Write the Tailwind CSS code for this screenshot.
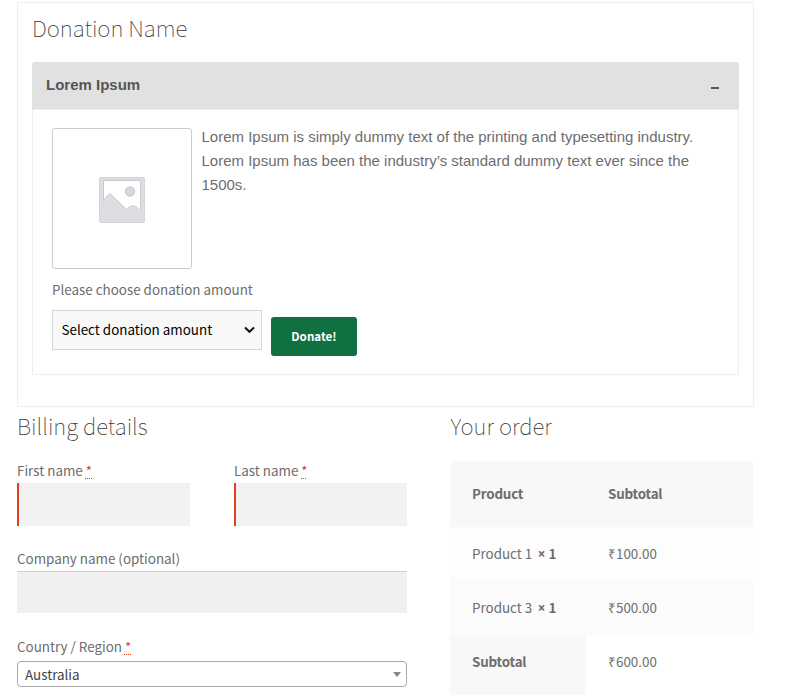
<!DOCTYPE html>
<html lang="en"><head><meta charset="utf-8"><title>Checkout</title>
<script src="https://cdn.jsdelivr.net/npm/@tailwindcss/browser@4"></script></head>
<body class="bg-white font-['Noto_Sans_CJK_SC',sans-serif] text-[13.4px] leading-6 text-[#6d6d6d] h-[695px] overflow-hidden">
<main class="ml-[17px] w-[737px] pt-[2px]">
  <section class="h-[405px] border border-[#eeeeee] px-[14px] pt-[7px]">
    <h2 class="h-[52px] text-[22.3px] leading-[34px] font-thin text-[#333333]">Donation Name</h2>
    <div class="flex h-[47px] items-center justify-between rounded-t-[3px] bg-[#e1e1e1] pl-[14px] pr-5 font-['Liberation_Sans',sans-serif] text-[15px] font-bold text-[#555555]">
      <h3 class="-mt-[1px]">Lorem Ipsum</h3><span class="mt-[4px] h-[2px] w-2 bg-[#555555]"></span>
    </div>
    <div class="h-[266px] border border-[#eeeeee] px-[19px] pt-[18px]">
      <div class="flex gap-[9.5px]">
        <div class="flex h-[141px] w-[140px] shrink-0 items-center justify-center rounded-[3px] border border-[#cccccc]">
          <svg class="mt-[2px] h-[46px] w-[46px]" viewBox="0 0 46 46"><rect x=".5" y=".5" width="45" height="45" rx="1" fill="#dddee2" stroke="#d2d4d7"/><path d="M4.500 3.500H41.500V34C38 30 36 29 33.500 29C30.500 29 29.500 31 27.500 32.500L11 16.500L8 19L4.500 24Z" fill="#fff" stroke="#c4c6ca" stroke-width=".9"/><circle cx="31" cy="14.500" r="4.700" fill="#d6d7dc" stroke="#bfc1c6" stroke-width=".9"/></svg>
        </div>
        <p class="-mt-[3px] whitespace-nowrap font-['Liberation_Sans',sans-serif] text-[15px]">Lorem Ipsum is simply dummy text of the printing and typesetting industry.<br>Lorem Ipsum has been the industry’s standard dummy text ever since the<br>1500s.</p>
      </div>
      <p class="mt-[8px]">Please choose donation amount</p>
      <div class="mt-[9px] flex gap-[9px]">
        <div class="flex h-10 w-[210px] items-center justify-between border border-[#d5d5d5] bg-[#f8f8f8] pl-[8.5px] pr-[6px] text-black"><span class="-mt-[2px]">Select donation amount</span>
          <svg class="h-[8px] w-[11px]" viewBox="0 0 11 8" fill="none" stroke="#111" stroke-width="2"><path d="M1 1.500L5.500 5.800L10 1.500"/></svg></div>
        <button class="mt-[7px] h-[39px] w-[86px] rounded-[3px] bg-[#11703f] pb-[1px] text-[11.6px] font-bold text-white">Donate!</button>
      </div>
    </div>
  </section>
  <div class="flex gap-[43px]">
    <section class="w-[390px]">
      <h2 class="mt-[1px] h-[50px] text-[22.3px] leading-[34px] font-thin text-[#333333]">Billing details</h2>
      <div class="flex gap-11">
        <div class="w-[173px]"><label class="block">First name <abbr class="text-[#e2401c] underline decoration-dotted decoration-1 underline-offset-[2px]">*</abbr></label><div class="mt-[1px] h-[43px] border-l-2 border-[#e2401c] bg-[#f2f2f2]"></div></div>
        <div class="w-[173px]"><label class="block">Last name <abbr class="text-[#e2401c] underline decoration-dotted decoration-1 underline-offset-[2px]">*</abbr></label><div class="mt-[1px] h-[43px] border-l-2 border-[#e2401c] bg-[#f2f2f2]"></div></div>
      </div>
      <label class="mt-[20px] block">Company name (optional)</label><div class="mt-[1px] h-[42px] border-t border-[#d0d0d0] bg-[#f0f0f0]"></div>
      <label class="mt-[21px] block">Country / Region <abbr class="text-[#e2401c] underline decoration-dotted decoration-1 underline-offset-[2px]">*</abbr></label>
      <div class="mt-[3px] flex h-[26px] items-center justify-between rounded-[4px] border border-[#aaaaaa] pl-[7px] pr-[5px] text-[#444444]"><span>Australia</span><span class="border-x-4 border-t-[5px] border-x-transparent border-t-[#888888]"></span></div>
    </section>
    <section class="w-[303px]">
      <h2 class="mt-[1px] h-[53px] pl-[0.5px] text-[22.3px] leading-[34px] font-thin text-[#333333]">Your order</h2>
      <div class="grid grid-cols-[136px_167px] *:px-[22px]">
        <div class="h-[66px] bg-[#f8f8f8] pt-[20px] font-bold tracking-[-0.2px]">Product</div><div class="bg-[#f8f8f8] pt-[20px] font-bold tracking-[-0.2px]">Subtotal</div>
        <div class="h-[54px] bg-[#fdfdfd] pt-[14px]">Product 1<b class="ml-[5.5px]"><span class="font-['Noto_Sans']">×</span> 1</b></div><div class="bg-[#fdfdfd] pt-[14px]">₹100.00</div>
        <div class="h-[54px] bg-[#fbfbfb] pt-[14px]">Product 3<b class="ml-[5.5px]"><span class="font-['Noto_Sans']">×</span> 1</b></div><div class="bg-[#fbfbfb] pt-[14px]">₹500.00</div>
        <div class="h-[60px] bg-[#f8f8f8] pt-[14px] font-bold tracking-[-0.2px]">Subtotal</div><div class="pt-[14px]">₹600.00</div>
      </div>
    </section>
  </div>
</main>
</body></html>
